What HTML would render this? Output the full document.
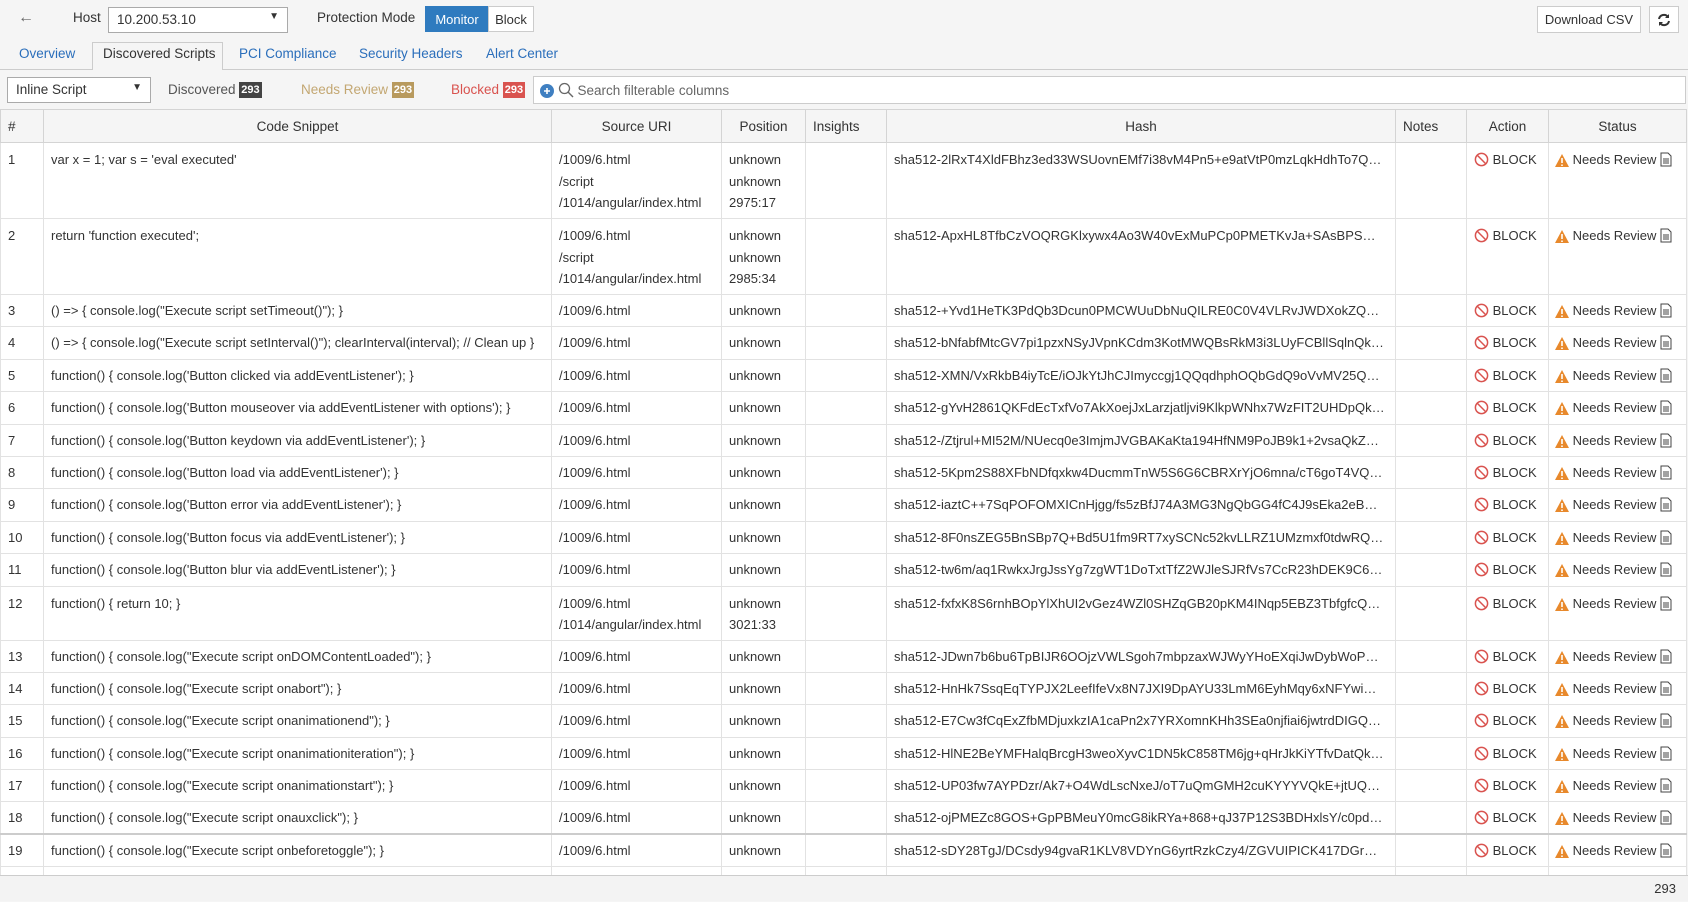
<!DOCTYPE html>
<html><head><meta charset="utf-8"><style>
*{box-sizing:border-box;margin:0;padding:0}
body{width:1688px;height:901px;overflow:hidden;background:#f5f5f5;font-family:"Liberation Sans",sans-serif;color:#333;position:relative;font-size:13px}
.abs{position:absolute}
.btn{position:absolute;border:1px solid #ccc;background:#fff;font-size:13px;display:flex;align-items:center;justify-content:center}
.tab{position:absolute;top:46px;font-size:13.5px;color:#2a6ebb}
.badge{display:inline-block;color:#fff;font-size:11px;font-weight:bold;padding:1px 2px;line-height:14px;vertical-align:1px}
table{position:absolute;left:0;top:109px;border-collapse:collapse;table-layout:fixed;width:1686px;background:#fff}
th{background:#f5f5f5;font-weight:normal;height:33px;border:1px solid #d4d4d4;font-size:13.5px}
td{border:1px solid #e2e2e2;vertical-align:top;padding:6px 7px 0;line-height:21.5px;white-space:nowrap;overflow:hidden;text-overflow:ellipsis;font-size:13px}
td.h{padding-right:10px}
tr.s td{height:32.4px;padding-top:5px}
tr.t td{height:76px}
tr.d td{height:54px}
th.l{text-align:left;padding-left:7px}
svg{vertical-align:-3px}
.foot{position:absolute;left:0;top:875px;width:1688px;height:26px;background:#f3f3f3;border-top:1px solid #ccc;text-align:right;padding-right:12px;line-height:26px;font-size:13px}
</style></head><body>
<div class="abs" style="left:18px;top:9px;font-size:16px;color:#666">&#8592;</div>
<div class="abs" style="left:73px;top:10px;font-size:13.5px">Host</div>
<div class="abs" style="left:108px;top:7px;width:180px;height:26px;border:1px solid #aaa;background:#fff;padding:4px 8px;font-size:13.5px">10.200.53.10<span style="position:absolute;right:8px;top:3px;font-size:10px">&#9660;</span></div>
<div class="abs" style="left:317px;top:10px;font-size:13.5px">Protection Mode</div>
<div class="btn" style="left:425px;top:6px;width:64px;height:26px;background:#2f7bbf;color:#fff;border-color:#2f7bbf">Monitor</div>
<div class="btn" style="left:488px;top:6px;width:46px;height:26px">Block</div>
<div class="btn" style="left:1537px;top:6px;width:104px;height:27px">Download CSV</div>
<div class="btn" style="left:1649px;top:6px;width:30px;height:27px"><svg width="14" height="14" viewBox="0 0 14 14"><path d="M2 6A5 5 0 0 1 11 4M12 8A5 5 0 0 1 3 10" stroke="#333" stroke-width="2" fill="none"/><path d="M12 1v4h-4zM2 13V9h4z" fill="#333"/></svg></div>
<div class="abs" style="left:0;top:69px;width:1688px;border-top:1px solid #ccc"></div>
<div class="abs" style="left:92px;top:42px;width:131px;height:28px;border:1px solid #ccc;border-bottom:none;background:#f5f5f5"></div>
<div class="tab" style="left:19px">Overview</div>
<div class="tab" style="left:103px;color:#333">Discovered Scripts</div>
<div class="tab" style="left:239px">PCI Compliance</div>
<div class="tab" style="left:359px">Security Headers</div>
<div class="tab" style="left:486px">Alert Center</div>
<div class="abs" style="left:7px;top:77px;width:144px;height:26px;border:1px solid #aaa;background:#fff;padding:4px 8px;font-size:13.5px">Inline Script<span style="position:absolute;right:8px;top:4px;font-size:10px">&#9660;</span></div>
<div class="abs" style="left:168px;top:82px;font-size:13.5px;color:#555">Discovered <span class="badge" style="background:#444">293</span></div>
<div class="abs" style="left:301px;top:82px;font-size:13.5px;color:#c3a772">Needs Review <span class="badge" style="background:#b89a5e">293</span></div>
<div class="abs" style="left:451px;top:82px;font-size:13.5px;color:#d9534f">Blocked <span class="badge" style="background:#d9534f">293</span></div>
<div class="abs" style="left:533px;top:76px;width:1153px;height:28px;border:1px solid #ccc;background:#fff;padding:5px 6px;color:#666;font-size:13.5px"><svg width="14" height="14" viewBox="0 0 14 14"><circle cx="7" cy="7" r="7" fill="#3f7fc1"/><path d="M7 4v6M4 7h6" stroke="#fff" stroke-width="1.6"/></svg> <svg width="16" height="16" viewBox="0 0 16 16"><circle cx="6.5" cy="6.5" r="5" stroke="#666" stroke-width="1.3" fill="none"/><path d="M10 10l5 5" stroke="#666" stroke-width="1.4"/></svg> Search filterable columns</div>
<table>
<colgroup><col style="width:43px"><col style="width:508px"><col style="width:170px"><col style="width:84px"><col style="width:81px"><col style="width:509px"><col style="width:71px"><col style="width:82px"><col style="width:138px"></colgroup>
<tr><th class="l">#</th><th>Code Snippet</th><th>Source URI</th><th>Position</th><th class="l">Insights</th><th>Hash</th><th class="l">Notes</th><th>Action</th><th>Status</th></tr>
<tbody id="tb"></tbody>
</table>
<div class="foot">293</div>
<script>
var B='<svg width="15" height="15" viewBox="0 0 16 16"><circle cx="8" cy="8" r="6.5" stroke="#d9534f" stroke-width="1.6" fill="none"/><path d="M3.5 3.5l9 9" stroke="#d9534f" stroke-width="1.6"/></svg> BLOCK';
var S='<svg width="14" height="13" viewBox="0 0 14 13"><path d="M7 0L14 13H0z" fill="#e8892c"/><path d="M7 4v5M7 10.5v1.5" stroke="#fff" stroke-width="1.6"/></svg> Needs Review <svg width="12" height="15" viewBox="0 0 12 15"><path d="M1 1h7l3 3v10H1z" stroke="#444" fill="none"/><path d="M3 7h6M3 9h6M3 11h6" stroke="#444"/></svg>';
var X='QkZ8rT4mWpL2vN9xYcB7hD3sF6gJ';
var R=[
["t","var x = 1; var s = 'eval executed'","/1009/6.html<br>/script<br>/1014/angular/index.html","unknown<br>unknown<br>2975:17","sha512-2lRxT4XldFBhz3ed33WSUovnEMf7i38vM4Pn5+e9atVtP0mzLqkHdhTo7"],
["t","return 'function executed';","/1009/6.html<br>/script<br>/1014/angular/index.html","unknown<br>unknown<br>2985:34","sha512-ApxHL8TfbCzVOQRGKlxywx4Ao3W40vExMuPCp0PMETKvJa+SAsBPS"],
["s",'() => { console.log("Execute script setTimeout()"); }',"/1009/6.html","unknown","sha512-+Yvd1HeTK3PdQb3Dcun0PMCWUuDbNuQILRE0C0V4VLRvJWDXokZ"],
["s",'() => { console.log("Execute script setInterval()"); clearInterval(interval); // Clean up }',"/1009/6.html","unknown","sha512-bNfabfMtcGV7pi1pzxNSyJVpnKCdm3KotMWQBsRkM3i3LUyFCBllSqln"],
["s","function() { console.log('Button clicked via addEventListener'); }","/1009/6.html","unknown","sha512-XMN/VxRkbB4iyTcE/iOJkYtJhCJImyccgj1QQqdhphOQbGdQ9oVvMV25"],
["s","function() { console.log('Button mouseover via addEventListener with options'); }","/1009/6.html","unknown","sha512-gYvH2861QKFdEcTxfVo7AkXoejJxLarzjatljvi9KlkpWNhx7WzFIT2UHDp"],
["s","function() { console.log('Button keydown via addEventListener'); }","/1009/6.html","unknown","sha512-/Ztjrul+MI52M/NUecq0e3ImjmJVGBAKaKta194HfNM9PoJB9k1+2vsa"],
["s","function() { console.log('Button load via addEventListener'); }","/1009/6.html","unknown","sha512-5Kpm2S88XFbNDfqxkw4DucmmTnW5S6G6CBRXrYjO6mna/cT6goT4V"],
["s","function() { console.log('Button error via addEventListener'); }","/1009/6.html","unknown","sha512-iaztC++7SqPOFOMXICnHjgg/fs5zBfJ74A3MG3NgQbGG4fC4J9sEka2eB"],
["s","function() { console.log('Button focus via addEventListener'); }","/1009/6.html","unknown","sha512-8F0nsZEG5BnSBp7Q+Bd5U1fm9RT7xySCNc52kvLLRZ1UMzmxf0tdwR"],
["s","function() { console.log('Button blur via addEventListener'); }","/1009/6.html","unknown","sha512-tw6m/aq1RwkxJrgJssYg7zgWT1DoTxtTfZ2WJleSJRfVs7CcR23hDEK9C6"],
["d","function() { return 10; }","/1009/6.html<br>/1014/angular/index.html","unknown<br>3021:33","sha512-fxfxK8S6rnhBOpYlXhUI2vGez4WZl0SHZqGB20pKM4INqp5EBZ3Tbfgfc"],
["s",'function() { console.log("Execute script onDOMContentLoaded"); }',"/1009/6.html","unknown","sha512-JDwn7b6bu6TpBIJR6OOjzVWLSgoh7mbpzaxWJWyYHoEXqiJwDybWoP"],
["s",'function() { console.log("Execute script onabort"); }',"/1009/6.html","unknown","sha512-HnHk7SsqEqTYPJX2LeefIfeVx8N7JXI9DpAYU33LmM6EyhMqy6xNFYwi"],
["s",'function() { console.log("Execute script onanimationend"); }',"/1009/6.html","unknown","sha512-E7Cw3fCqExZfbMDjuxkzIA1caPn2x7YRXomnKHh3SEa0njfiai6jwtrdDIG"],
["s",'function() { console.log("Execute script onanimationiteration"); }',"/1009/6.html","unknown","sha512-HlNE2BeYMFHalqBrcgH3weoXyvC1DN5kC858TM6jg+qHrJkKiYTfvDat"],
["s",'function() { console.log("Execute script onanimationstart"); }',"/1009/6.html","unknown","sha512-UP03fw7AYPDzr/Ak7+O4WdLscNxeJ/oT7uQmGMH2cuKYYYVQkE+jtU"],
["s",'function() { console.log("Execute script onauxclick"); }',"/1009/6.html","unknown","sha512-ojPMEZc8GOS+GpPBMeuY0mcG8ikRYa+868+qJ37P12S3BDHxlsY/c0pd"],
["s",'function() { console.log("Execute script onbeforetoggle"); }',"/1009/6.html","unknown","sha512-sDY28TgJ/DCsdy94gvaR1KLV8VDYnG6yrtRzkCzy4/ZGVUIPICK417DGr"],
["s","","","",""]];
var h='';
R.forEach(function(r,i){var n=i<19?i+1:'';var st=i==17?' style="border-bottom:2px solid #ccc"':'';
h+='<tr class="'+r[0]+'"'+st+'><td>'+n+'</td><td>'+r[1]+'</td><td>'+r[2]+'</td><td>'+r[3]+'</td><td></td><td class="h">'+(r[4]?r[4]+X:'')+'</td><td></td><td>'+(i<19?B:'')+'</td><td style="padding-left:6px">'+(i<19?S:'')+'</td></tr>';});
document.getElementById('tb').innerHTML=h;
</script>
</body></html>
